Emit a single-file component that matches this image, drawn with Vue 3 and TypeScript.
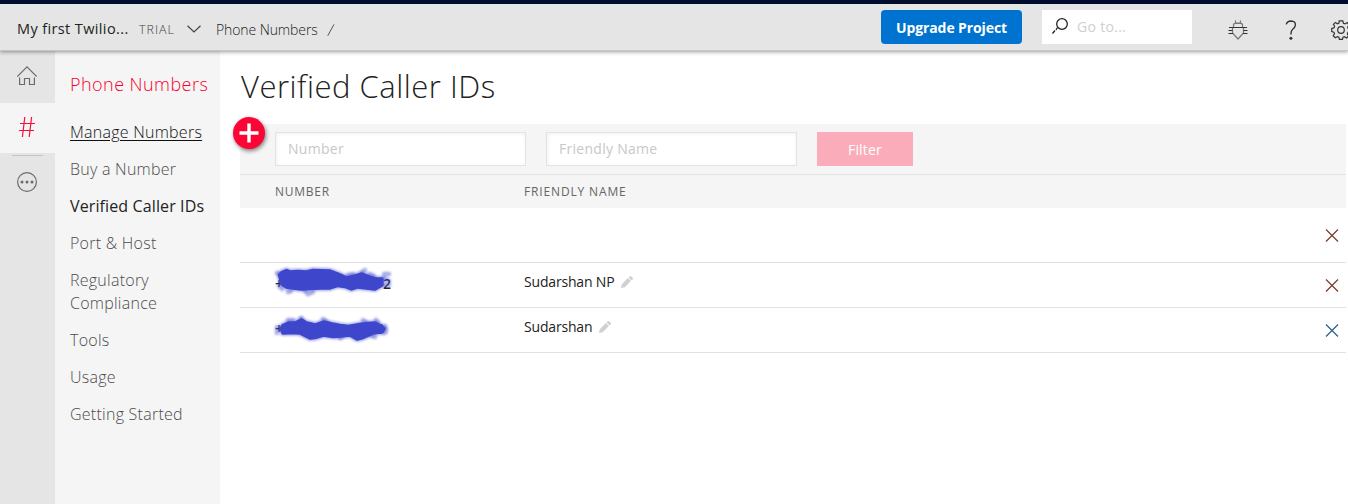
<script setup lang="ts">
interface MenuItem {
  label: string
  state?: 'current' | 'hovered'
}

interface CallerRow {
  id: number
  tail: string
  name: string
  scribble: string
  smears: string
}

const menu: MenuItem[] = [
  { label: 'Manage Numbers', state: 'hovered' },
  { label: 'Buy a Number' },
  { label: 'Verified Caller IDs', state: 'current' },
  { label: 'Port & Host' },
  { label: 'Regulatory Compliance' },
  { label: 'Tools' },
  { label: 'Usage' },
  { label: 'Getting Started' },
]

const rows: CallerRow[] = [
  { id: 1, tail: '', name: '', scribble: '', smears: '' },
  {
    id: 2,
    tail: '2',
    name: 'Sudarshan NP',
    scribble:
      'M11.5 9 L14 6.5 L18.5 4.5 L22.5 6 L30 5.5 L38.5 6 L45 4.5 L62 5 L70 8 L79 12 L87 10 L94 8 L102 11 L108 13 L114 13 L114 19 L107 23 L98.5 22 L90 21 L83.5 23 L77 20.5 L70 19.5 L62 22 L52 22 L42 22.5 L33.5 23 L25 22 L18.5 21 L14 18 Z',
    smears:
      'M9 7 L12 8 M20 26 L23 25 M37 25 L40 28 L45 26 M80 9 L85 8 M94 6 L97 4 M102 8 L106 10 M116 8 L121 8 M116 12 L121 15 M117 19 L121 19 M11 20 L14 23',
  },
  {
    id: 3,
    tail: '3',
    name: 'Sudarshan',
    scribble:
      'M13 17.5 L15 14.5 L20.5 12 L27 12 L33.5 9 L38.5 12 L47 14 L55.5 11 L64 13 L72 14.5 L80.5 15.5 L89 14 L95 13 L107 12 L113 15 L116 17.5 L114.5 20.5 L105.5 22 L95 26.5 L89 28 L82 24 L72 25 L65.5 25.5 L55.5 24 L47 26.5 L42 27 L32 22 L24 21.5 L15 22 Z',
    smears:
      'M9 16 L9 22 M20 9 L25 9 M33 7 L34 9 M55 8 L58 10 M72 27 L74 26 M95 9 L98 11 M108 9 L110 11 M117 15 L118 19 M116 22 L118 21 M104 25 L107 26',
  },
]
</script>

<template>
  <div class="console">
    <header class="topbar">
      <span class="project">My first Twilio...</span>
      <span class="trial">TRIAL</span>
      <svg class="chevron" width="14" height="8" viewBox="0 0 14 8"><path d="M.5 .7 L7 7 L13.5 .7" /></svg>
      <span class="crumb">Phone Numbers</span>
      <svg class="slash" width="8" height="12" viewBox="0 0 8 12"><path d="M.7 11.8 L7 .4" /></svg>
      <div class="spacer"></div>
      <button class="upgrade">Upgrade Project</button>
      <div class="search">
        <svg width="18" height="18" viewBox="0 0 18 18">
          <circle cx="11" cy="7" r="5.3" />
          <path d="M6.5 10.5 L5 13 M4 13.5 L1.5 16.5" />
        </svg>
        <span>Go to...</span>
      </div>
      <div class="tools">
        <svg class="bug" width="20" height="20" viewBox="0 0 20 20">
          <path class="faint" d="M7.5 .5V3H12.5V.5M5.5 7V5Q5.5 3.3 7.5 3.3H12.5Q14.5 3.3 14.5 5V7M4.5 7.5V13L10 19L15.5 13V7.5" />
          <path d="M1 7.5H19M.5 10.5H4.5M.5 13.5H5M15.5 10.5H19.5M15 13.5H19.5" />
        </svg>
        <svg class="help" width="12" height="20" viewBox="0 0 12 20">
          <path d="M1.2 4.4Q2.2 1 6 1Q10.6 1.2 10.4 5Q10.2 7.5 7.7 9.3Q5.9 10.7 5.9 14.5" />
          <circle cx="5.9" cy="18.2" r="1.5" />
        </svg>
        <svg class="gear" width="20" height="20" viewBox="0 0 20 20">
          <path d="M8.2 .8H11.8L12.4 3.2L14 3.9L16.2 2.6L18 5L16.7 7L17.2 8.6L19.3 9.2V11.8L17 12.3L16.4 13.9L17.6 16L15.5 18L13.4 16.7L12 17.3L11.4 19.3H8.4L7.9 17.2L6.4 16.6L4.4 17.8L2.2 15.8L3.5 13.7L2.9 12.2L.7 11.6V8.5L2.9 7.9L3.6 6.3L2.4 4.4L4.5 2.4L6.5 3.7L8 3Z" />
          <circle cx="10" cy="10" r="3.3" />
        </svg>
      </div>
    </header>

    <div class="body">
      <nav class="rail">
        <div class="rail-item home">
          <svg width="20" height="20" viewBox="0 0 20 20">
            <path d="M.3 10.5 L10 .9 L19.7 10.5 M2.6 11.5 V18.5 H7.5 V12.5 H12.5 V18.5 H17.4 V11.5" />
          </svg>
        </div>
        <div class="rail-item active">
          <svg width="16" height="20" viewBox="0 0 16 20">
            <path d="M5.8 0 L3.4 20 M12.6 0 L10.2 20 M1 6.5 H16 M0 13.5 H15" />
          </svg>
        </div>
        <div class="rail-rule"></div>
        <div class="rail-item more">
          <svg width="20" height="20" viewBox="0 0 20 20">
            <circle cx="10" cy="10" r="9.4" />
            <g class="dots">
              <circle cx="5" cy="10" r="1.5" /><circle cx="10" cy="10" r="1.5" /><circle cx="15" cy="10" r="1.5" />
            </g>
          </svg>
        </div>
      </nav>

      <aside class="sidebar">
        <h2>Phone Numbers</h2>
        <ul>
          <li v-for="item in menu" :key="item.label" :class="item.state">
            <a>{{ item.label }}</a>
          </li>
        </ul>
      </aside>

      <main class="content">
        <h1>Verified Caller IDs</h1>
        <section class="table">
          <button class="add" aria-label="Add">
            <svg width="20" height="20" viewBox="0 0 20 20"><path d="M10 0.5V19.5M0.5 10H19.5" /></svg>
          </button>
          <div class="filters">
            <div class="field">Number</div>
            <div class="field">Friendly Name</div>
            <button class="filter">Filter</button>
          </div>
          <div class="row head">
            <span class="h-number">NUMBER</span>
            <span class="h-name">FRIENDLY NAME</span>
          </div>
          <div v-for="row in rows" :key="row.id" class="row" :class="{ tall: !row.name }">
            <div class="number">
              <template v-if="row.scribble">
                <span class="plus">+</span>
                <span class="tail" :class="{ short: row.tail === '3' }">{{ row.tail }}</span>
                <svg class="scribble" width="140" height="34" viewBox="0 0 140 34">
                  <path class="halo" :d="row.scribble" />
                  <path class="smear" :d="row.smears" />
                  <path class="ink" :d="row.scribble" />
                </svg>
              </template>
            </div>
            <div class="name">
              <template v-if="row.name">
                <span>{{ row.name }}</span>
                <svg width="12" height="12" viewBox="0 0 12 12">
                  <path d="M0 12 L.8 8.2 L6.9 2.1 L9.9 5.1 L3.8 11.2 Z M7.6 1.4 L8.8 .3 Q9.6 -.3 10.3 .4 L11.7 1.8 Q12.3 2.5 11.7 3.2 L10.6 4.4 Z" />
                </svg>
              </template>
            </div>
            <svg class="remove" width="14" height="14" viewBox="0 0 14 14"><path d="M1 .5 L13 12.5 M13 .5 L1 12.5" /></svg>
          </div>
        </section>
      </main>
    </div>
  </div>
</template>

<style>
body {
  margin: 0;
  background: #fff;
}
</style>

<style scoped>
.console {
  width: 1348px;
  height: 504px;
  overflow: hidden;
  display: flex;
  flex-direction: column;
  font-family: "Open Sans", "Noto Sans", sans-serif;
  color: #222;
}
* {
  box-sizing: border-box;
}
svg {
  display: block;
  fill: none;
  flex: none;
}
button {
  border: 0;
  padding: 0;
  font-family: inherit;
}
.topbar {
  flex: none;
  height: 51px;
  border-top: 4px solid #020d2e;
  border-bottom: 1px solid #c6c6c6;
  background: #e5e5e5;
  box-shadow: 0 1px 4px rgba(0, 0, 0, 0.4);
  position: relative;
  z-index: 1;
  display: flex;
  align-items: flex-start;
  padding-left: 17px;
  white-space: nowrap;
}
.project {
  width: 122px;
  margin-top: 15px;
  font-size: 14.5px;
  line-height: 20px;
  letter-spacing: 0.38px;
}
.trial {
  width: 48px;
  margin-top: 15px;
  font-size: 12.5px;
  line-height: 21px;
  font-weight: 350;
  letter-spacing: 0.95px;
  color: #444;
}
.chevron {
  margin-top: 21px;
  stroke: #444;
  stroke-width: 1.2;
}
.crumb {
  width: 111px;
  margin: 16px 0 0 15px;
  font-size: 14px;
  line-height: 20px;
  font-weight: 350;
  letter-spacing: -0.1px;
  color: #222;
}
.slash {
  margin-top: 20px;
  stroke: #555;
}
.spacer {
  flex: 1;
}
.upgrade {
  width: 141px;
  height: 34px;
  margin-top: 6px;
  border-radius: 4px;
  background: #0073d0;
  color: #fff;
  font-size: 14px;
  font-weight: 700;
  letter-spacing: -0.1px;
}
.search {
  width: 150px;
  height: 34px;
  margin: 6px 0 0 20px;
  padding-left: 9px;
  background: #fff;
  display: flex;
  font-size: 14px;
  line-height: 34px;
  letter-spacing: 0.3px;
  color: #cfcfcf;
}
.search svg {
  margin: 7px 8px 0 0;
  stroke: #222;
  stroke-width: 1.3;
}
.tools {
  width: 156px;
  padding: 16px 0 0 36px;
  display: flex;
  overflow: hidden;
}
.tools svg {
  stroke: #333;
  stroke-width: 1.2;
}
.tools .faint {
  stroke: #777;
}
.help {
  margin-left: 37px;
}
.tools .help {
  stroke-width: 1.4;
}
.help circle {
  fill: #333;
  stroke: none;
}
.gear {
  margin-left: 34px;
}
.body {
  flex: 1;
  display: flex;
}
.rail {
  width: 55px;
  background: #e5e5e5;
}
.rail-item {
  height: 50px;
  display: flex;
  justify-content: center;
  align-items: center;
  padding-right: 1px;
}
.rail-item svg {
  stroke: #6b6b6b;
  stroke-width: 1.2;
}
.rail-item.home {
  height: 52px;
  padding-bottom: 3px;
}
.rail-item.active {
  background: #f5f5f5;
  padding-bottom: 2px;
}
.rail-item.active svg {
  stroke: #f5103a;
}
.rail-item.more {
  padding-top: 2px;
}
.rail-rule {
  width: 31px;
  height: 1px;
  margin: 2px 0 0 12px;
  background: #c4c4c4;
}
.rail-item.more .dots circle {
  fill: #6b6b6b;
  stroke: none;
}
.sidebar {
  width: 165px;
  padding-left: 15px;
  background: #f5f5f5;
}
.sidebar h2 {
  margin: 21px 0 0;
  font-size: 18px;
  line-height: 24px;
  font-weight: 350;
  letter-spacing: 0.45px;
  color: #f5002f;
  white-space: nowrap;
}
.sidebar ul {
  margin: 25px 0 0;
  padding: 0;
  list-style: none;
}
.sidebar li {
  width: 140px;
  margin-bottom: 14px;
  font-size: 16px;
  line-height: 23px;
  font-weight: 350;
  letter-spacing: 0.25px;
  color: #4c4c4c;
}
.sidebar li.hovered a {
  text-decoration: underline;
  text-underline-offset: 2px;
}
.sidebar li.hovered {
  color: #111;
}
.sidebar li.current {
  font-weight: 400;
  letter-spacing: 0.12px;
  color: #222;
  white-space: nowrap;
}
.content {
  width: 1128px;
  padding: 0 2px 0 20px;
}
h1 {
  margin: 13px 0 0 1px;
  height: 60px;
  font-size: 31px;
  line-height: 44px;
  font-weight: 300;
  letter-spacing: 0.52px;
  white-space: nowrap;
}
.table {
  position: relative;
}
.add {
  position: absolute;
  left: -7px;
  top: -7px;
  width: 32px;
  height: 32px;
  border-radius: 50%;
  background: #fb0436;
  box-shadow: 1px 2px 4px rgba(0, 0, 0, 0.5);
  display: flex;
  align-items: center;
  justify-content: center;
}
.add svg {
  stroke: #fff;
  stroke-width: 3.4;
}
.filters {
  height: 51px;
  padding: 8px 0 0 35px;
  display: flex;
  gap: 20px;
  background: #f5f5f5;
  border-bottom: 1px solid #e2e2e2;
}
.field {
  width: 251px;
  height: 34px;
  padding-left: 12px;
  border: 1px solid #e3e3e3;
  background: #fff;
  box-shadow: inset 1px 1px 4px rgba(0, 0, 0, 0.06);
  font-size: 14px;
  line-height: 32px;
  letter-spacing: 0.28px;
  color: #c8c8c8;
}
.filter {
  width: 96px;
  height: 34px;
  background: #faacba;
  color: #fff;
  font-size: 14px;
  font-weight: 500;
  letter-spacing: 0.2px;
}
.row {
  height: 45px;
  display: grid;
  grid-template-columns: 284px 801px 14px;
  border-bottom: 1px solid #e2e2e2;
}
.row.tall {
  height: 55px;
}
.row.tall .remove {
  margin-top: 21px;
}
.row.head {
  height: 33px;
  border: 0;
  background: #f5f5f5;
  font-size: 12px;
  line-height: 33px;
  color: #666;
}
.h-number {
  padding-left: 35px;
  letter-spacing: 0.75px;
}
.h-name {
  letter-spacing: 0.85px;
}
.number {
  position: relative;
  font-size: 14px;
}
.plus,
.tail {
  position: absolute;
  top: 11px;
  left: 35px;
  line-height: 20px;
  font-weight: 600;
}
.tail {
  left: 143px;
}
.tail.short {
  left: 136px;
}
.scribble {
  position: absolute;
  left: 28px;
  top: 3px;
}
.ink {
  fill: #3e46cb;
  stroke: #3e46cb;
  stroke-width: 3.4;
  stroke-linejoin: round;
}
.halo {
  stroke: #3e46cb;
  stroke-opacity: 0.45;
  stroke-width: 6;
  stroke-linejoin: round;
  filter: blur(1px);
}
.smear {
  stroke: #3e46cb;
  stroke-opacity: 0.45;
  stroke-width: 4.5;
  stroke-linecap: round;
  filter: blur(1px);
}
.name {
  padding-top: 9px;
  display: flex;
  font-size: 14px;
  line-height: 20px;
  letter-spacing: -0.18px;
}
.name svg {
  margin: 4px 0 0 7px;
  fill: #d0d0d0;
}
.remove {
  margin-top: 16px;
  stroke: #7a3b2c;
  stroke-width: 1.2;
}
.row:last-child .remove {
  stroke: #2f5f87;
}
</style>
